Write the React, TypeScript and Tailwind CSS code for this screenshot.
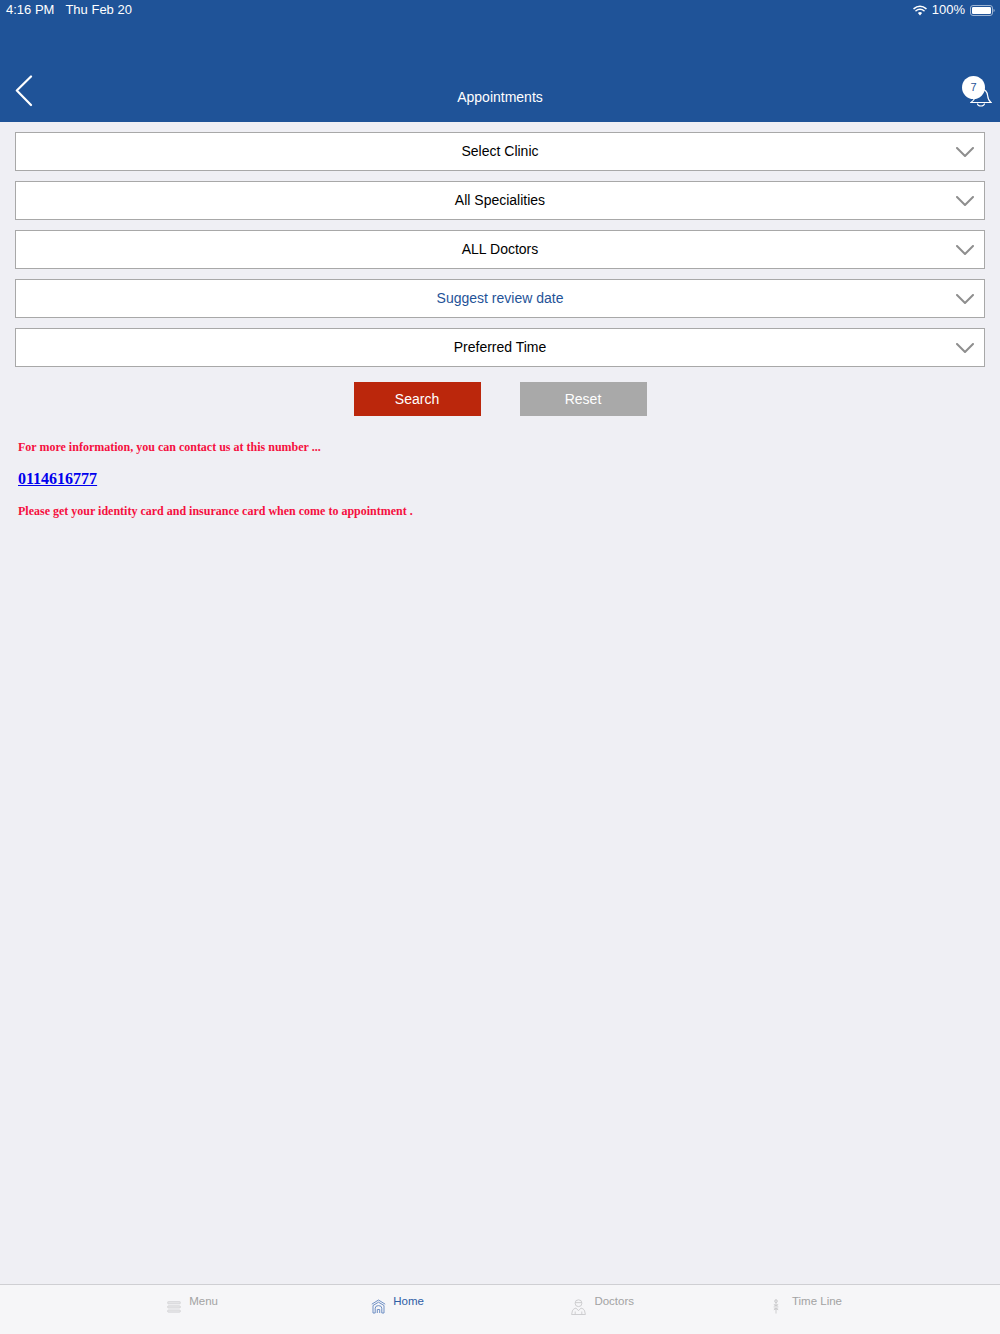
import React from "react";

const fields = [
  { label: "Select Clinic", color: "text-black" },
  { label: "All Specialities", color: "text-black" },
  { label: "ALL Doctors", color: "text-black" },
  { label: "Suggest review date", color: "text-[#1f5398]" },
  { label: "Preferred Time", color: "text-black" },
];

const Chevron = () => (
  <svg width="18" height="10" viewBox="0 0 18 10" fill="none" className="absolute right-[10px] top-[14px]">
    <path d="M1 1l8 8 8-8" stroke="#8e8e8e" strokeWidth="2" strokeLinecap="round" strokeLinejoin="round" />
  </svg>
);

const MenuIcon = () => (
  <svg width="14" height="12" viewBox="0 0 14 12" fill="none" className="mt-[7px]">
    <rect x="0.5" y="0.5" width="13" height="2.4" rx="1.2" fill="#e4e4e6" stroke="#cfcfd2" strokeWidth="0.6" />
    <rect x="0.5" y="4.7" width="13" height="2.4" rx="1.2" fill="#e4e4e6" stroke="#cfcfd2" strokeWidth="0.6" />
    <rect x="0.5" y="8.9" width="13" height="2.4" rx="1.2" fill="#e4e4e6" stroke="#cfcfd2" strokeWidth="0.6" />
  </svg>
);

const HomeIcon = () => (
  <svg width="15" height="15" viewBox="0 0 15 15" fill="none" className="mt-[5px]" stroke="#6e8fc4" strokeWidth="1">
    <path d="M0.8 5.2L7.5 1l6.7 4.2" />
    <path d="M2 6.5L7.5 3.2 13 6.5V14h-2.2V9.2a3.3 2.6 0 00-6.6 0V14H2z" />
    <path d="M6.3 14v-3.5h2.4V14" />
  </svg>
);

const DoctorIcon = () => (
  <svg width="15" height="16" viewBox="0 0 15 16" fill="none" className="mt-[5px]" stroke="#c9c9cc" strokeWidth="0.9">
    <circle cx="7.5" cy="4.2" r="3.4" />
    <path d="M4.1 3.6h6.8" />
    <path d="M0.6 15.5l0.8-3.6c0.4-1.6 2.4-2.6 3.6-2.8l2.5 2.6 2.5-2.6c1.2 0.2 3.2 1.2 3.6 2.8l0.8 3.6z" />
    <path d="M4.2 12.5v3M10.8 12.5v3" />
  </svg>
);

const StaffIcon = () => (
  <svg width="6" height="15" viewBox="0 0 6 15" fill="none" className="mt-[5px]" stroke="#c9c9cc" strokeWidth="0.9">
    <path d="M3 0.5v14" />
    <circle cx="3" cy="2.2" r="1.4" />
    <path d="M0.8 5.4L5.2 7.4M5.2 5.4L0.8 7.4M0.8 8.8l4.4 2M5.2 8.8l-4.4 2" />
  </svg>
);

const tabs = [
  { label: "Menu", icon: <MenuIcon />, color: "text-[#a3a3a3]", width: "w-[51px]" },
  { label: "Home", icon: <HomeIcon />, color: "text-[#2f5ea6]", width: "w-[53px]" },
  { label: "Doctors", icon: <DoctorIcon />, color: "text-[#a3a3a3]", width: "w-[63px]" },
  { label: "Time Line", icon: <StaffIcon />, color: "text-[#a3a3a3]", width: "w-[69px]" },
];

const App: React.FC = () => {
  return (
    <div className="flex h-[1334px] w-[1000px] flex-col overflow-hidden bg-[#efeff4] font-['Liberation_Sans',Arial,sans-serif]">
      <div className="relative h-[122px] shrink-0 bg-[#1f5398] text-white">
        <div className="flex h-5 items-center justify-between pl-[6px] pr-[5px] text-[13px]">
          <div className="flex gap-[11px]">
            <span>4:16 PM</span>
            <span>Thu Feb 20</span>
          </div>
          <div className="flex items-center gap-[5px]">
            <svg width="14" height="11" viewBox="0 0 14 11" fill="none">
              <path d="M1 3.6a8.6 8.6 0 0112 0M3 5.8a5.7 5.7 0 018 0" stroke="white" strokeWidth="1.5" strokeLinecap="round" />
              <path d="M7 10.4L4.9 8a3 3 0 014.2 0z" fill="white" />
            </svg>
            <span>100%</span>
            <svg width="25" height="11" viewBox="0 0 25 11" fill="none">
              <rect x="0.5" y="0.5" width="22" height="10" rx="2.5" stroke="#9db4d3" />
              <rect x="2" y="2" width="19" height="7" rx="1.2" fill="white" />
              <path d="M23.5 4v3c0.7-0.2 1.2-0.8 1.2-1.5S24.2 4.200 23.500 4z" fill="#9db4d3" />
            </svg>
          </div>
        </div>
        <svg width="18" height="32" viewBox="0 0 18 32" fill="none" className="absolute left-[15px] top-[75px]">
          <path d="M16 1.500L1.800 15.500 16 30" stroke="white" strokeWidth="2.200" strokeLinecap="round" strokeLinejoin="round" />
        </svg>
        <div className="absolute inset-x-0 top-[88px] text-center text-[14px] leading-[18px]">Appointments</div>
        <svg width="22" height="24" viewBox="0 0 22 24" fill="none" className="absolute left-[970px] top-[83px]" stroke="white" strokeWidth="1.200">
          <path d="M1 19.500c2.500-1.500 3.500-3 4.200-6 0.800-3.500 2-6.500 6-7 4-0.500 6 2.500 6.400 6 0.300 3 1 5.200 3.400 7z" />
          <path d="M7.500 20.500a3.500 2.500 0 007 0" />
        </svg>
        <div className="absolute left-[962px] top-[76px] flex size-[23px] items-center justify-center rounded-full bg-white text-[11px] text-[#1f5398]">
          7
        </div>
      </div>

      <div className="flex flex-col gap-[10px] px-[15px] pt-[10px]">
        {fields.map((field) => (
          <div
            key={field.label}
            className={`relative flex h-[39px] items-center justify-center border border-[#a8a8a8] bg-white text-[14px] ${field.color}`}
          >
            {field.label}
            <Chevron />
          </div>
        ))}
      </div>

      <div className="mt-[15px] flex justify-center gap-[39px] text-[14px] text-white">
        <div className="flex h-[34px] w-[127px] items-center justify-center bg-[#bb270c]">Search</div>
        <div className="flex h-[34px] w-[127px] items-center justify-center bg-[#a9a9a9]">Reset</div>
      </div>

      <div className="flex flex-col items-start pl-[18px] pt-[24px] font-['Liberation_Serif','Times_New_Roman',serif] font-bold">
        <p className="text-[12px] leading-[15px] text-[#f5103f]">For more information, you can contact us at this number ...</p>
        <a className="mt-[15px] text-[16px] leading-[18px] text-[#0000ee] underline">0114616777</a>
        <p className="mt-[16px] text-[12px] leading-[15px] text-[#f5103f]">
          Please get your identity card and insurance card when come to appointment .
        </p>
      </div>

      <div className="mt-auto flex h-[50px] shrink-0 justify-center border-t border-[#cfcfd3] bg-[#f6f6f8] text-[11.500px]">
        {tabs.map((tab) => (
          <div key={tab.label} className="flex w-[205px] justify-center">
            <div className={`flex items-start justify-between pt-[9px] ${tab.width} ${tab.color}`}>
              {tab.icon}
              <span className="leading-[14px]">{tab.label}</span>
            </div>
          </div>
        ))}
      </div>
    </div>
  );
};

export default App;
